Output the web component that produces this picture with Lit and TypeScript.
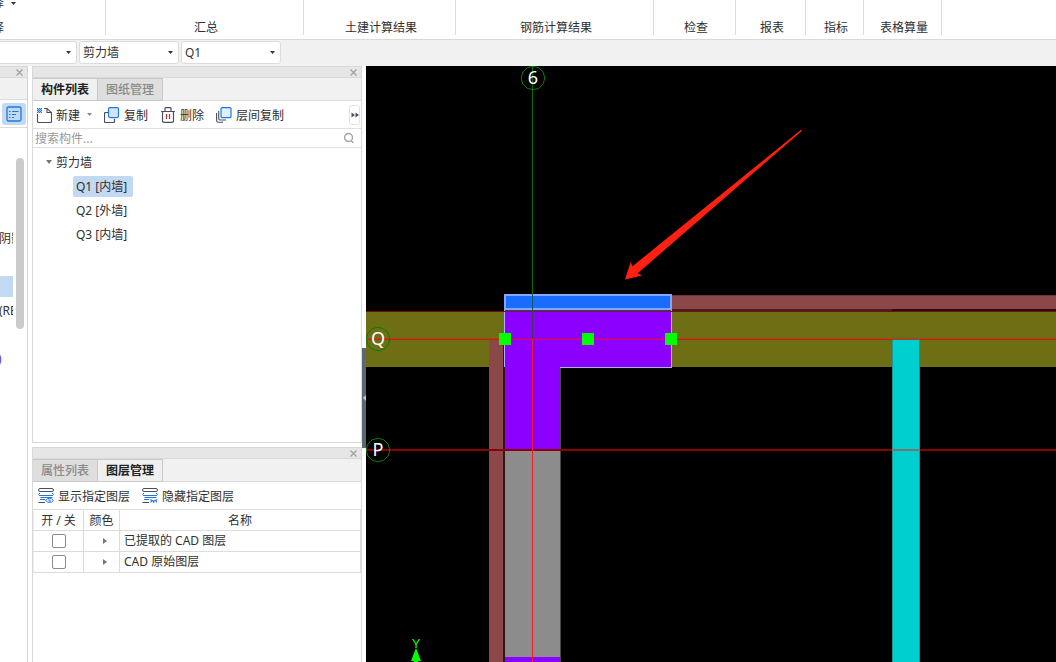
import { LitElement, html, css, svg } from "lit";
import { customElement, property, state } from "lit/decorators.js";
import { classMap } from "lit/directives/class-map.js";

const shared = css`
  * {
    box-sizing: border-box;
  }
  button,
  input,
  select {
    font: inherit;
    color: inherit;
    margin: 0;
    padding: 0;
    border: 0;
    background: none;
    border-radius: 0;
  }
  svg {
    display: block;
    flex: none;
  }
`;

const closeIcon = html`<svg width="9" height="9" viewBox="0 0 9 9" aria-hidden="true">
  <path d="M1.500 1.500l6 6M7.500 1.500l-6 6" stroke="currentColor" stroke-width="1.2" fill="none" />
</svg>`;

const downCaret = html`<svg width="5" height="3" viewBox="0 0 5 3" aria-hidden="true">
  <path d="M0 0h5L2.5 3z" fill="currentColor" />
</svg>`;

const newIcon = html`<svg width="16" height="16" viewBox="0 0 16 16" aria-hidden="true">
  <path d="M1.5 7v7.500q0 1 1 1h12q1 0 1-1V5.500L11 1.500H8" fill="none" stroke="#4a4f60" stroke-width="1.1" />
  <path d="M11 1.500V5.500h4.500" fill="none" stroke="#4a4f60" stroke-width="1.1" />
  <path d="M1 1h1v1h-1zM3 1h1v1h-1zM5 1h1v1h-1zM2 2h1v1h-1zM4 2h1v1h-1zM1 3h1v1h-1zM3 3h1v1h-1zM5 3h1v1h-1zM2 4h1v1h-1zM4 4h1v1h-1zM1 5h1v1h-1zM3 5h1v1h-1zM5 5h1v1h-1z" fill="#1d78e6" />
  <rect x="1" y="1" width="5" height="5" fill="#1d78e6" opacity="0.400" />
</svg>`;

const copyIcon = html`<svg width="16" height="16" viewBox="0 0 16 16" aria-hidden="true">
  <path d="M5 5.500H1.500q-1 0-1 1v8q0 1 1 1h8q1 0 1-1V12" fill="none" stroke="#4a4f60" stroke-width="1.2" />
  <rect x="4.500" y="0.600" width="10" height="10" rx="1.500" fill="#d3e4fb" stroke="#1d78e6" stroke-width="1.200" />
</svg>`;

const deleteIcon = html`<svg width="16" height="16" viewBox="0 0 16 16" aria-hidden="true">
  <path d="M1 4.500h14M5 4.500V1.500q0-.8.8-.8h4.400q.8 0 .8.800v3M2.500 4.500v9.500q0 1.300 1.300 1.300h8.400q1.300 0 1.300-1.300V4.500" fill="none" stroke="#4a4f60" stroke-width="1.2" />
  <path d="M6.500 7v5M9.500 7v5" stroke="#d8232f" stroke-width="1.2" />
</svg>`;

const floorCopyIcon = html`<svg width="16" height="16" viewBox="0 0 16 16" aria-hidden="true">
  <path d="M0.600 6v7.500q0 1.800 1.800 1.800H7M2.700 4v7.500q0 1.500 1.500 1.500H10" fill="none" stroke="#4a4f60" stroke-width="1.1" />
  <rect x="5" y="0.600" width="10" height="10" rx="1" fill="#e4effd" stroke="#1d78e6" stroke-width="1.200" />
</svg>`;

const layerIcon = (shown: boolean) => html`<svg width="16" height="16" viewBox="0 0 16 16" aria-hidden="true">
  <rect x="0.500" y="0.500" width="15" height="3" rx="1.500" fill="#fff" stroke="#4a4f60" stroke-width="1" />
  <path d="M2 5.500q-1.500 0-1.500 1M14 5.500q1.500 0 1.500 1" fill="none" stroke="#4a4f60" stroke-width="1" />
  <path d="M1 7.500h14M2.500 9.500h12" fill="none" stroke="#1d78e6" stroke-width="1" />
  <path d="M2 11.500h5" fill="none" stroke="#1d78e6" stroke-width="1" />
  <path d="M.5 14.500h6.500" fill="none" stroke="#4a4f60" stroke-width="1" />
  ${shown
    ? svg`<path d="M7.500 12.500q3.800-4.500 8 0q-4 4-8 0z" fill="#fff" stroke="#1d78e6" stroke-width="1" />
        <path d="M11 11.200v1.800h2" fill="none" stroke="#1d78e6" stroke-width="1" />`
    : svg`<path d="M8.500 11.500q3 3 6.500 0M9.500 13l-.8 1.500M11.700 13.200V15M14 13l.8 1.500" fill="none" stroke="#1d78e6" stroke-width="1.100" />`}
</svg>`;

const RIBBON = [
  { label: "汇总", width: 198 },
  { label: "土建计算结果", width: 152 },
  { label: "钢筋计算结果", width: 198 },
  { label: "检查", width: 82 },
  { label: "报表", width: 70 },
  { label: "指标", width: 58 },
  { label: "表格算量", width: 78 },
];

@customElement("ribbon-bar")
class RibbonBar extends LitElement {
  static styles = [
    shared,
    css`
      :host {
        display: flex;
        flex: none;
        height: 40px;
        background: #fff;
        border-bottom: 1px solid #d9d9d9;
        overflow: hidden;
        box-sizing: border-box;
      }
      .group {
        flex: none;
        display: flex;
        align-items: flex-end;
        justify-content: center;
        height: 35px;
        padding-left: 3px;
        line-height: 14px;
        border-right: 1px solid #dadada;
      }
      .first {
        width: 106px;
        padding-left: 0;
        flex-direction: column;
        justify-content: space-between;
        align-items: flex-start;
      }
      .clipped {
        margin-left: -20px;
      }
      .tool {
        display: flex;
        align-items: center;
        gap: 7px;
        margin-top: -5px;
        line-height: 16px;
      }
    `,
  ];
  render() {
    return html`<div class="group first">
        <button class="tool clipped">选择 ${downCaret}</button>
        <span class="clipped">选择</span>
      </div>
      ${RIBBON.map((g) => html`<div class="group" style="width:${g.width}px">${g.label}</div>`)}`;
  }
}

@customElement("combo-box")
class ComboBox extends LitElement {
  @property() value = "";
  @property() label = "";
  static styles = [
    shared,
    css`
      :host {
        display: block;
        width: 100px;
      }
      .box {
        display: grid;
        align-items: center;
        height: 23px;
        background: #fff;
        border: 1px solid #dcdcdc;
        border-radius: 3px;
        color: #333;
      }
      select {
        grid-area: 1 / 1;
        appearance: none;
        width: 100%;
        height: 21px;
        padding: 0 3px;
        outline: none;
      }
      svg {
        grid-area: 1 / 1;
        justify-self: end;
        margin-right: 5px;
        pointer-events: none;
      }
    `,
  ];
  render() {
    return html`<div class="box">
      <select aria-label=${this.label}>
        <option>${this.value}</option>
      </select>
      ${downCaret}
    </div>`;
  }
}

@customElement("dock-panel")
class DockPanel extends LitElement {
  @property({ type: Array }) tabs: string[] = [];
  @property({ type: Number }) active = 0;
  static styles = [
    shared,
    css`
      :host {
        display: flex;
        flex-direction: column;
        min-height: 0;
        background: #fff;
        border: 1px solid #d9d9d9;
      }
      .title {
        display: flex;
        justify-content: flex-end;
        align-items: center;
        height: 11px;
        padding-right: 3px;
        background: #e6e6e6;
        color: #a0a0a0;
        border-bottom: 1px solid #d9d9d9;
      }
      .title button {
        display: flex;
      }
      .tabs {
        display: flex;
        height: 23px;
        background: #f1f1f1;
        border-bottom: 1px solid #dcdcdc;
      }
      .tab {
        width: 66px;
        height: 23px;
        line-height: 20px;
        border: 1px solid #c8c8ce;
        background: #dedede;
        color: #8a8a8a;
        font-weight: 500;
        text-align: center;
      }
      .tab + .tab {
        margin-left: -1px;
      }
      .tab:first-child {
        width: 65px;
        border-left: 0;
      }
      .tab.on {
        background: #f0f0f0;
        color: #222;
        font-weight: 700;
      }
    `,
  ];
  render() {
    return html`<div class="title"><button aria-label="关闭">${closeIcon}</button></div>
      <div class="tabs" role="tablist">
        ${this.tabs.map(
          (t, i) => html`<button
            role="tab"
            class=${classMap({ tab: true, on: i === this.active })}
            aria-selected=${i === this.active}
            @click=${() => (this.active = i)}
          >${t}</button>`
        )}
      </div>
      <slot></slot>`;
  }
}

@customElement("side-strip")
class SideStrip extends LitElement {
  static styles = [
    shared,
    css`
      :host {
        display: flex;
        flex-direction: column;
        overflow: hidden;
        background: #fff;
        border-right: 1px solid #d4d4d4;
        border-top: 1px solid #d9d9d9;
      }
      .title {
        display: flex;
        justify-content: flex-end;
        align-items: center;
        height: 11px;
        padding-right: 3px;
        background: #e6e6e6;
        color: #a0a0a0;
        border-bottom: 1px solid #d9d9d9;
      }
      .title button {
        display: flex;
      }
      .band {
        height: 22px;
        background: #f1f1f1;
        border-bottom: 1px solid #dcdcdc;
      }
      .tools {
        display: flex;
        align-items: center;
        justify-content: flex-end;
        height: 28px;
        padding-right: 1px;
        border-bottom: 1px solid #dcdcdc;
      }
      .tools button {
        display: grid;
        place-items: center;
        width: 24px;
        height: 22px;
        border-radius: 3px;
        background: #c2d9f2;
      }
      .body {
        display: flex;
        gap: 3px;
        padding-top: 26px;
      }
      ul {
        width: 13px;
        margin: 0;
        padding: 0;
        list-style: none;
        overflow: hidden;
        white-space: nowrap;
      }
      li {
        height: 24px;
        line-height: 26px;
        text-indent: -1px;
      }
      .selected {
        background: #c2d9f2 content-box;
        padding: 2px 0 1px;
      }
      .cut {
        text-indent: -2px;
        color: #5a2fc0;
      }
      .thumb {
        width: 8px;
        height: 171px;
        margin-top: 4px;
        border-radius: 4px;
        background: #cbcbcb;
      }
    `,
  ];
  render() {
    return html`<div class="title"><button aria-label="关闭">${closeIcon}</button></div>
      <div class="band"></div>
      <div class="tools">
        <button aria-label="列表">
          <svg width="16" height="16" viewBox="0 0 16 16">
            <rect x="1" y="1" width="14" height="14" rx="1.500" fill="none" stroke="#1d78e6" stroke-width="1.300" />
            <path d="M3 5.500h1.500M6 5.500H12.500M3 8.500h1.500M6 8.500H10M3 11.500h1.500M6 11.500H8" stroke="#1d78e6" stroke-width="1" />
          </svg>
        </button>
      </div>
      <div class="body">
        <ul>
          <li></li>
          <li></li>
          <li></li>
          <li>阴影</li>
          <li></li>
          <li class="selected"></li>
          <li>(RB)</li>
          <li></li>
          <li class="cut">)</li>
        </ul>
        <div class="thumb"></div>
      </div>`;
  }
}

@customElement("component-list")
class ComponentList extends LitElement {
  @state() selected = 0;
  static styles = [
    shared,
    css`
      :host {
        display: block;
      }
      .tools {
        display: flex;
        align-items: center;
        gap: 12px;
        height: 28px;
        padding: 0 1px 0 3px;
        border-bottom: 1px solid #e0e0e0;
      }
      .tool {
        display: flex;
        align-items: center;
        gap: 4px;
        white-space: nowrap;
      }
      .menu {
        display: flex;
      }
      .drop {
        display: flex;
        justify-content: flex-end;
        align-items: center;
        width: 12px;
        color: #8a8a8a;
      }
      .more {
        display: grid;
        place-items: center;
        width: 11px;
        height: 20px;
        margin-left: auto;
        border: 1px solid #e2e2e2;
        border-radius: 3px;
      }
      .search {
        display: flex;
        align-items: center;
        height: 19px;
        padding: 0 6px 0 2px;
        border-bottom: 1px solid #e0e0e0;
      }
      .search input {
        flex: 1;
        min-width: 0;
        height: 18px;
        outline: none;
      }
      .search input::placeholder {
        color: #9a9a9a;
        opacity: 1;
      }
      .tree {
        padding: 2px 0 0 13px;
      }
      .root {
        display: flex;
        align-items: center;
        gap: 4px;
        height: 24px;
      }
      .root svg {
        color: #777;
      }
      .leaves {
        display: flex;
        flex-direction: column;
        align-items: flex-start;
        gap: 3px;
        padding: 2px 0 0 27px;
      }
      .leaf {
        min-width: 60px;
        height: 21px;
        padding: 0 4px 0 3px;
        border-radius: 2px;
        line-height: 20px;
        text-align: left;
      }
      .leaf.on {
        background: #c2d9f2;
      }
    `,
  ];
  render() {
    const items = ["Q1 [内墙]", "Q2 [外墙]", "Q3 [内墙]"];
    return html`<div class="tools">
        <div class="menu">
          <button class="tool">${newIcon}新建</button>
          <button class="drop" aria-label="更多新建选项">${downCaret}</button>
        </div>
        <button class="tool">${copyIcon}复制</button>
        <button class="tool">${deleteIcon}删除</button>
        <button class="tool">${floorCopyIcon}层间复制</button>
        <button class="more" aria-label="更多">
          <svg width="8" height="6" viewBox="0 0 8 6"><path d="M.500 0.500L4 3L.500 5.500zM4.500 0.500L8 3L4.500 5.500z" fill="#4a4f60" /></svg>
        </button>
      </div>
      <div class="search">
        <input type="text" aria-label="搜索构件" placeholder="搜索构件..." />
        <svg width="12" height="12" viewBox="0 0 12 12">
          <circle cx="5.500" cy="5.500" r="4" fill="none" stroke="#a0a0a0" stroke-width="1.300" />
          <path d="M8 8.500l2.200 2.200" stroke="#a0a0a0" stroke-width="1.400" />
        </svg>
      </div>
      <div class="tree" role="tree">
        <div class="root" role="treeitem" aria-expanded="true">
          <svg width="6" height="4" viewBox="0 0 6 4"><path d="M0 0h6L3 4z" fill="currentColor" /></svg>剪力墙
        </div>
        <div class="leaves" role="group">
          ${items.map(
            (t, i) => html`<button
              role="treeitem"
              class=${classMap({ leaf: true, on: i === this.selected })}
              @click=${() => (this.selected = i)}
            >${t}</button>`
          )}
        </div>
      </div>`;
  }
}

@customElement("layer-list")
class LayerList extends LitElement {
  static styles = [
    shared,
    css`
      :host {
        display: block;
      }
      .tools {
        display: flex;
        align-items: center;
        gap: 12px;
        height: 27px;
        padding-left: 5px;
      }
      .tool {
        display: flex;
        align-items: center;
        gap: 4px;
        white-space: nowrap;
      }
      table {
        width: 100%;
        table-layout: fixed;
        border-collapse: collapse;
      }
      th,
      td {
        height: 21px;
        padding: 0 4px;
        border: 1px solid #dcdcdc;
        line-height: 16px;
        font-weight: 400;
        text-align: left;
      }
      th {
        padding: 1px 0 0;
        text-align: center;
      }
      th:first-child,
      td:first-child {
        border-left-color: #ececec;
      }
      .toggle {
        width: 50px;
      }
      .colour {
        width: 36px;
      }
      .mid {
        display: flex;
        justify-content: center;
        padding-left: 6px;
      }
      .check {
        display: flex;
        justify-content: center;
      }
      input {
        appearance: none;
        width: 14px;
        height: 14px;
        border: 1px solid #8a8a8a;
        border-radius: 2px;
        background: #fff;
      }
      input:checked {
        background: #1d78e6;
      }
    `,
  ];
  render() {
    return html`<div class="tools">
        <button class="tool">${layerIcon(true)}显示指定图层</button>
        <button class="tool">${layerIcon(false)}隐藏指定图层</button>
      </div>
      <table>
        <thead>
          <tr>
            <th class="toggle">开 / 关</th>
            <th class="colour">颜色</th>
            <th>名称</th>
          </tr>
        </thead>
        <tbody>
          ${["已提取的 CAD 图层", "CAD 原始图层"].map(
            (name, i) => html`<tr>
              <td><div class="check"><input type="checkbox" aria-labelledby="layer-${i}" /></div></td>
              <td>
                <div class="mid">
                  <svg width="4" height="6" viewBox="0 0 4 6"><path d="M0 0L4 3L0 6z" fill="#777" /></svg>
                </div>
              </td>
              <td id="layer-${i}">${name}</td>
            </tr>`
          )}
        </tbody>
      </table>`;
  }
}

function ring(cx: number, cy: number, r: number) {
  const pts: string[] = [];
  for (let i = 0; i < 12; i++) {
    const a = (i * Math.PI) / 6;
    pts.push(`${(cx + r * Math.cos(a)).toFixed(1)},${(cy + r * Math.sin(a)).toFixed(1)}`);
  }
  return pts.join(" ");
}

@customElement("plan-view")
class PlanView extends LitElement {
  static styles = css`
    :host {
      display: block;
      min-width: 0;
      min-height: 0;
      overflow: hidden;
      background: #000;
    }
    svg {
      display: block;
      width: 100%;
      height: 100%;
    }
    .axis {
      fill: #fff;
      font: 18px "Noto Sans", sans-serif;
      text-anchor: middle;
    }
    .ucs {
      fill: #0f0;
      font: 13px "Liberation Sans", sans-serif;
      text-anchor: middle;
    }
  `;
  render() {
    const marks = [
      { t: "Q", x: 378, y: 339 },
      { t: "P", x: 378, y: 450 },
      { t: "6", x: 533, y: 78 },
    ];
    // World coordinates start at (366, 66) in the top-left corner of the view.
    return html`<svg role="img" aria-label="平面图">
      <g transform="translate(-366 -66)">
        <rect x="366" y="312" width="2000" height="55" fill="#6e6e14" />
        <rect x="671" y="295" width="2000" height="14" fill="#8c4848" />
        <rect x="671" y="295" width="2000" height="1" fill="#6b3537" />
        <rect x="671" y="309" width="221" height="2" fill="#402020" />
        <rect x="892" y="309" width="2000" height="2" fill="#241010" />
        <rect x="489" y="339" width="14" height="318" fill="#8c4848" />
        <rect x="489" y="657" width="14" height="900" fill="#8c4848" />
        <rect x="503" y="339" width="2" height="1200" fill="#301717" />
        <path d="M505 310H671V367H560V450H505z" fill="#8c00ff" />
        <rect x="505" y="310" width="166" height="1" fill="#38406a" />
        <rect x="505" y="450" width="55" height="207" fill="#8c8c8c" />
        <rect x="505" y="657" width="55" height="900" fill="#8c00ff" />
        <rect x="560" y="368" width="1" height="1200" fill="#484848" />
        <path d="M504 310h1v57h-1zM671 310h1v58H560v-1h111z" fill="#a9b4ff" />
        <rect x="366" y="311" width="2000" height="1" fill="#7d0a0a" />
        <rect x="505" y="311" width="166" height="1" fill="#8a0a50" />
        <rect x="366" y="338" width="2000" height="1" fill="#d81a10" opacity="0.350" />
        <rect x="366" y="339" width="2000" height="1" fill="#d81a10" />
        <rect x="505" y="339" width="166" height="1" fill="#e0006a" />
        <rect x="366" y="449" width="2000" height="2" fill="#8b0000" />
        <rect x="892" y="340" width="28" height="1200" fill="#00cfcf" />
        <path d="M892 340h1v1200h-1zM919 340h1v1200h-1z" fill="#159c9c" />
        <rect x="892" y="338" width="28" height="2" fill="#a0451c" />
        <rect x="892" y="449" width="28" height="2" fill="#7c7070" />
        <rect x="504" y="294" width="168" height="16" fill="#80a8ff" />
        <rect x="506" y="296" width="164" height="12" fill="#1a6cff" />
        <rect x="532" y="66" width="1" height="228" fill="#006e00" />
        <rect x="532" y="294" width="1" height="17" fill="#0a5560" />
        <rect x="532" y="311" width="1" height="28" fill="#3c3c50" />
        <rect x="532" y="339" width="1" height="1200" fill="#f01a28" />
        ${[505, 588, 671].map((x) => svg`<rect x=${x - 6} y="333" width="12" height="12" fill="#00ff00" />`)}
        ${marks.map(
          (m) => svg`<polygon points=${ring(m.x, m.y, 11.8)} fill="none" stroke="#008200" stroke-width="1" />
          <text class="axis" x=${m.x} y=${m.y + 6}>${m.t}</text>`
        )}
        <path d="M625 279.500L630.700 262L632.500 266.300L801 129.800L802 130.800L637.700 273.300L642 275.500z" fill="#ff2012" />
        <text class="ucs" x="416" y="648">Y</text>
        <path d="M416 648L421 661H418V662H414V661H411z" fill="#00ff00" />
      </g>
    </svg>`;
  }
}

@customElement("app-root")
class AppRoot extends LitElement {
  static styles = [
    shared,
    css`
      :host {
        display: flex;
        flex-direction: column;
        height: 100vh;
        overflow: hidden;
        background: #fff;
        color: #303030;
        font: 12px "Noto Sans", "Noto Sans CJK SC", sans-serif;
      }
      .filters {
        flex: none;
        display: flex;
        gap: 2px;
        height: 26px;
        padding-top: 1px;
        background: #f1f1f1;
      }
      .filters combo-box:first-child {
        margin-left: -23px;
      }
      .main {
        flex: 1;
        min-height: 0;
        display: grid;
        grid-template-columns: 28px 334px 4px minmax(0, 1fr);
        grid-template-rows: minmax(0, 1fr);
      }
      .docks {
        display: grid;
        grid-template-rows: 377fr 216fr;
        gap: 4px;
        min-height: 0;
        margin-bottom: -1px;
        padding-left: 4px;
      }
      .splitter {
        padding-top: 282px;
      }
      .grip {
        display: grid;
        place-items: center;
        width: 4px;
        height: 100px;
        background: #5c6873;
      }
    `,
  ];
  render() {
    return html`<ribbon-bar></ribbon-bar>
      <div class="filters">
        <combo-box label="分类" value=""></combo-box>
        <combo-box label="构件类型" value="剪力墙"></combo-box>
        <combo-box label="构件" value="Q1"></combo-box>
      </div>
      <div class="main">
        <side-strip></side-strip>
        <div class="docks">
          <dock-panel .tabs=${["构件列表", "图纸管理"]} .active=${0}><component-list></component-list></dock-panel>
          <dock-panel .tabs=${["属性列表", "图层管理"]} .active=${1}><layer-list></layer-list></dock-panel>
        </div>
        <div class="splitter">
          <button class="grip" aria-label="收起面板">
            <svg width="3" height="6" viewBox="0 0 3 6"><path d="M3 0v6L0 3z" fill="#c4cad0" /></svg>
          </button>
        </div>
        <plan-view></plan-view>
      </div>`;
  }
}
